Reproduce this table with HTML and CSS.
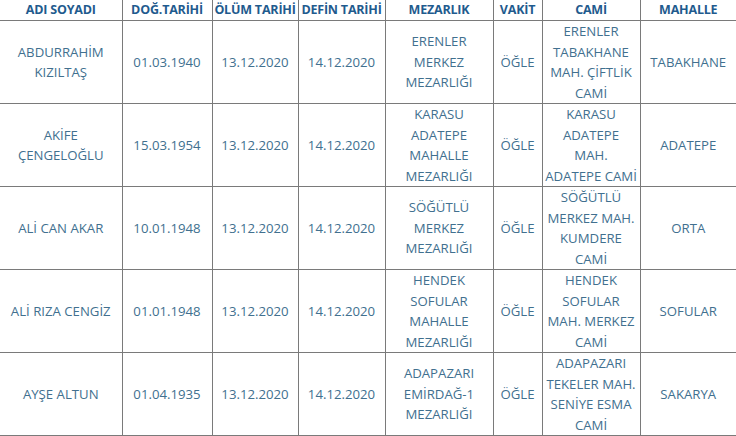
FILE: index.html
```html
<!DOCTYPE html>
<html lang="tr">
<head>
<meta charset="utf-8">
<link rel="stylesheet" href="styles.css">
</head>
<body>
<table class="grid">
  <colgroup>
    <col class="c1"><col class="c2"><col class="c3"><col class="c4"><col class="c5"><col class="c6"><col class="c7"><col class="c8">
  </colgroup>
  <thead>
    <tr><th>ADI SOYADI</th><th>DOĞ.TARİHİ</th><th>ÖLÜM TARİHİ</th><th>DEFİN TARİHİ</th><th>MEZARLIK</th><th>VAKİT</th><th>CAMİ</th><th>MAHALLE</th></tr>
  </thead>
  <tbody>
    <tr><td>ABDURRAHİM<br>KIZILTAŞ</td><td>01.03.1940</td><td>13.12.2020</td><td>14.12.2020</td><td>ERENLER<br>MERKEZ<br>MEZARLIĞI</td><td>ÖĞLE</td><td>ERENLER<br>TABAKHANE<br>MAH. ÇİFTLİK<br>CAMİ</td><td>TABAKHANE</td></tr>
    <tr><td>AKİFE<br>ÇENGELOĞLU</td><td>15.03.1954</td><td>13.12.2020</td><td>14.12.2020</td><td>KARASU<br>ADATEPE<br>MAHALLE<br>MEZARLIĞI</td><td>ÖĞLE</td><td>KARASU<br>ADATEPE<br>MAH.<br>ADATEPE CAMİ</td><td>ADATEPE</td></tr>
    <tr><td>ALİ CAN AKAR</td><td>10.01.1948</td><td>13.12.2020</td><td>14.12.2020</td><td>SÖĞÜTLÜ<br>MERKEZ<br>MEZARLIĞI</td><td>ÖĞLE</td><td>SÖĞÜTLÜ<br>MERKEZ MAH.<br>KUMDERE<br>CAMİ</td><td>ORTA</td></tr>
    <tr><td>ALİ RIZA CENGİZ</td><td>01.01.1948</td><td>13.12.2020</td><td>14.12.2020</td><td>HENDEK<br>SOFULAR<br>MAHALLE<br>MEZARLIĞI</td><td>ÖĞLE</td><td>HENDEK<br>SOFULAR<br>MAH. MERKEZ<br>CAMİ</td><td>SOFULAR</td></tr>
    <tr><td>AYŞE ALTUN</td><td>01.04.1935</td><td>13.12.2020</td><td>14.12.2020</td><td>ADAPAZARI<br>EMİRDAĞ-1<br>MEZARLIĞI</td><td>ÖĞLE</td><td>ADAPAZARI<br>TEKELER MAH.<br>SENİYE ESMA<br>CAMİ</td><td>SAKARYA</td></tr>
  </tbody>
</table>
</body>
</html>
```

FILE: styles.css
```css
html, body {
  margin: 0;
  padding: 0;
  background: #ffffff;
}
.grid {
  border-collapse: collapse;
  table-layout: fixed;
  width: 736px;
  font-family: "Open Sans", "Liberation Sans", sans-serif;
}
.c1 { width: 122px; }
.c2 { width: 90px; }
.c3 { width: 86px; }
.c4 { width: 87px; }
.c5 { width: 108px; }
.c6 { width: 49px; }
.c7 { width: 98px; }
.c8 { width: 96px; }
.grid th, .grid td {
  border: 1px solid #7a7a7a;
  text-align: center;
  padding: 0;
}
.grid tr > :first-child { border-left: none; }
.grid tr > :last-child { border-right: none; }
.grid thead th {
  border-top: none;
  height: 20px;
  font-size: 12.5px;
  font-weight: 700;
  color: #1f5b8e;
  line-height: 20px;
  white-space: nowrap;
  letter-spacing: -0.2px;
}
.grid tbody td {
  height: 82px;
  font-size: 13.2px;
  line-height: 20.5px;
  color: #41708f;
  white-space: nowrap;
}
```
